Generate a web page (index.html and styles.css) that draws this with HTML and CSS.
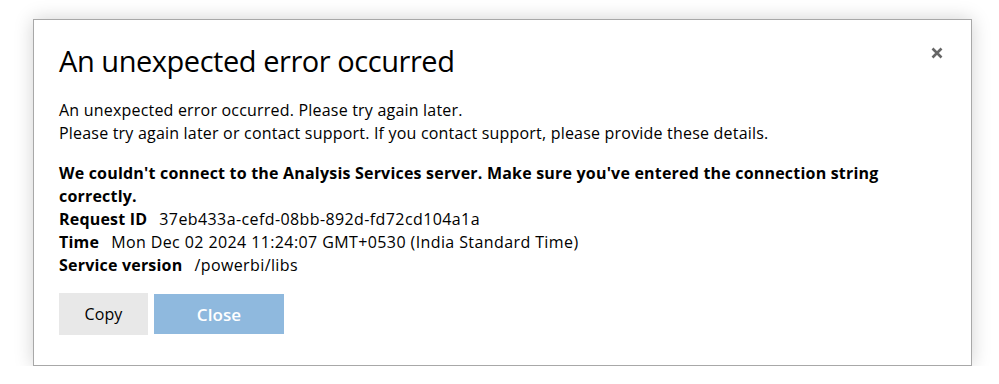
FILE: index.html
```html
<!DOCTYPE html>
<html lang="en">
<head>
<meta charset="utf-8">
<title>Error</title>
<link rel="stylesheet" href="styles.css">
</head>
<body>
<div class="dialog">
  <div class="header">
    <h1 class="title">An unexpected error occurred</h1>
    <button class="close-x" aria-label="Close">
      <svg width="12" height="12" viewBox="0 0 12 12"><path d="M1.5 1.5 L10.5 10.5 M10.5 1.5 L1.5 10.5" stroke="#666" stroke-width="2.6" stroke-linecap="butt"/></svg>
    </button>
  </div>
  <div class="message">
    <div>An unexpected error occurred. Please try again later.</div>
    <div>Please try again later or contact support. If you contact support, please provide these details.</div>
  </div>
  <div class="details">
    <div class="strong">We couldn't connect to the Analysis Services server. Make sure you've entered the connection string correctly.</div>
    <div><span class="label">Request ID</span><span class="value">37eb433a-cefd-08bb-892d-fd72cd104a1a</span></div>
    <div><span class="label">Time</span><span class="value">Mon Dec 02 2024 11:24:07 GMT+0530 (India Standard Time)</span></div>
    <div><span class="label">Service version</span><span class="value">/powerbi/libs</span></div>
  </div>
  <div class="actions">
    <button class="btn btn-copy">Copy</button>
    <button class="btn btn-close">Close</button>
  </div>
</div>
</body>
</html>
```
FILE: styles.css
```css
html, body {
  margin: 0;
  padding: 0;
  background: #ffffff;
}
body {
  font-family: "Open Sans", "Noto Sans", sans-serif;
  color: #000;
  padding: 19px 0 0 33px;
}
.dialog {
  box-sizing: border-box;
  width: 939px;
  height: 347px;
  border: 1px solid #a8a8a8;
  background: #fff;
  box-shadow: 0 0 18px rgba(0, 0, 0, 0.18);
  padding: 0 25px 0 25px;
}
.header {
  display: flex;
  justify-content: space-between;
  align-items: flex-start;
}
.title {
  margin: 0;
  padding-top: 22px;
  font-weight: 400;
  font-size: 29px;
  line-height: 38px;
  letter-spacing: -0.45px;
}
.close-x {
  margin: 27px 3px 0 0;
  padding: 0;
  border: 0;
  background: none;
  width: 12px;
  height: 12px;
  display: block;
}
.close-x svg { display: block; }
.message {
  margin-top: 19px;
  font-size: 16px;
  line-height: 23px;
  letter-spacing: 0.2px;
}
.details {
  margin-top: 17px;
  font-size: 16px;
  line-height: 23px;
  letter-spacing: 0.2px;
}
.strong {
  font-weight: 700;
  padding-right: 30px;
}
.label {
  font-weight: 700;
  margin-right: 12px;
}
.value {
  letter-spacing: 0.4px;
}
.actions {
  display: flex;
  align-items: center;
  gap: 6px;
  margin-top: 16px;
}
.btn {
  font-family: inherit;
  border: 0;
  font-size: 16px;
  letter-spacing: 0.1px;
  padding: 0;
}
.btn-copy {
  width: 89px;
  height: 42px;
  background: #e8e8e8;
  color: #000;
}
.btn-close {
  width: 130px;
  height: 40px;
  background: #8fb9de;
  color: #fff;
  font-weight: 600;
  font-size: 17px;
}
```
